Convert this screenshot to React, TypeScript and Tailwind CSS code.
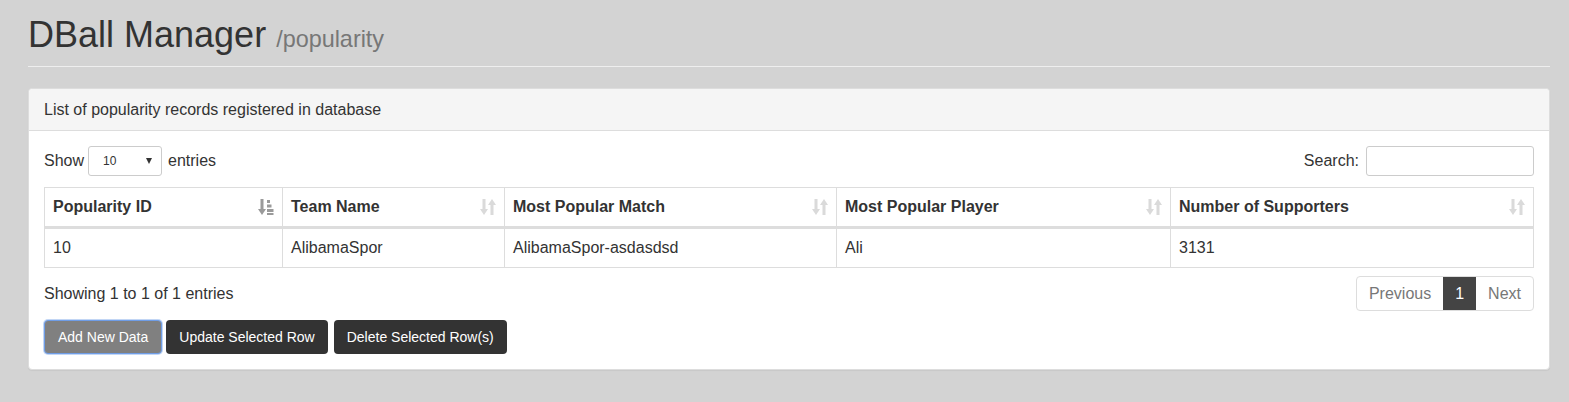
import React from "react";

type Col = { label: string; width: string; sorted?: boolean };

const columns: Col[] = [
  { label: "Popularity ID", width: "w-[238px]", sorted: true },
  { label: "Team Name", width: "w-[222px]" },
  { label: "Most Popular Match", width: "w-[332px]" },
  { label: "Most Popular Player", width: "w-[334px]" },
  { label: "Number of Supporters", width: "" },
];

const rows = [["10", "AlibamaSpor", "AlibamaSpor-asdasdsd", "Ali", "3131"]];

function SortIcon({ sorted }: { sorted?: boolean }) {
  if (sorted) {
    return (
      <svg width="16" height="18" viewBox="0 0 16 18" className="shrink-0">
        <g fill="#9a9a9a">
          <rect x="2.5" y="1" width="3" height="11" />
          <polygon points="0,11 8,11 4,17" />
          <rect x="9" y="2" width="3" height="3" />
          <rect x="9" y="6.5" width="4.5" height="3" />
          <rect x="9" y="11" width="6.5" height="3" />
          <rect x="9" y="15" width="6.5" height="2" />
        </g>
      </svg>
    );
  }
  return (
    <svg width="16" height="18" viewBox="0 0 16 18" className="shrink-0">
      <g fill="#dadada">
        <rect x="2.5" y="1" width="3" height="11" />
        <polygon points="0,11 8,11 4,17" />
        <rect x="10.5" y="6" width="3" height="11" />
        <polygon points="8,7 16,7 12,1" />
      </g>
    </svg>
  );
}

export default function App() {
  return (
    <main className="min-h-[402px] bg-[#d3d3d3] pl-[28px] pr-[19px] font-['Liberation_Sans',Arial,sans-serif] text-[16px] text-[#333]">
      <div className="border-b border-[#eeeeee] pt-[15px] pb-[7px]">
        <h1 className="text-[36px] leading-[40px] text-[#333]">
          DBall Manager{" "}
          <small className="text-[23.4px] text-[#777]">/popularity</small>
        </h1>
      </div>

      <div className="mt-[21px] rounded-[4px] border border-[#dddddd] bg-white shadow-[0_1px_1px_rgba(0,0,0,0.05)]">
        <div className="rounded-t-[4px] border-b border-[#dddddd] bg-[#f5f5f5] px-[15px] py-[10px] leading-[21px]">
          List of popularity records registered in database
        </div>

        <div className="p-[15px]">
          <div className="flex h-[30px] items-center justify-between">
            <label className="flex items-center">
              Show
              <span className="relative ml-[4px] mr-[6px] inline-flex h-[30px] w-[74px] items-center rounded-[3px] border border-[#cccccc] bg-white pl-[14px] text-[12px]">
                10
                <span className="absolute right-[9px] top-[11px] h-0 w-0 border-x-[3.5px] border-t-[6px] border-x-transparent border-t-[#333]" />
              </span>
              entries
            </label>
            <label className="flex items-center gap-[7px]">
              Search:
              <span className="inline-block h-[30px] w-[168px] rounded-[3px] border border-[#cccccc] bg-white" />
            </label>
          </div>

          <table className="mt-[11px] w-full border-collapse border border-[#dddddd]">
            <thead>
              <tr>
                {columns.map((c) => (
                  <th
                    key={c.label}
                    className={`${c.width} h-[40px] border border-b-[3px] border-[#dddddd] pl-[8px] pr-[8px] text-left font-bold`}
                  >
                    <div className="flex items-center justify-between">
                      <span>{c.label}</span>
                      <SortIcon sorted={c.sorted} />
                    </div>
                  </th>
                ))}
              </tr>
            </thead>
            <tbody>
              {rows.map((r, i) => (
                <tr key={i}>
                  {r.map((v, j) => (
                    <td
                      key={j}
                      className="h-[40px] border border-[#dddddd] px-[8px]"
                    >
                      {v}
                    </td>
                  ))}
                </tr>
              ))}
            </tbody>
          </table>

          <div className="mt-[8px] flex items-center justify-between">
            <div>Showing 1 to 1 of 1 entries</div>
            <div className="flex h-[35px] items-stretch overflow-hidden rounded-[4px] border border-[#dddddd] leading-[20px]">
              <span className="flex items-center px-[12px] text-[#777]">
                Previous
              </span>
              <span className="flex items-center bg-[#444444] px-[12px] text-white">
                1
              </span>
              <span className="flex items-center px-[12px] text-[#777]">
                Next
              </span>
            </div>
          </div>

          <div className="mt-[9px] flex text-[14px]">
            <button className="h-[34px] rounded-[4px] border border-[#6f9de6] bg-[#808080] px-[13px] text-white shadow-[0_0_0_1px_rgba(102,153,230,0.4)]">
              Add New Data
            </button>
            <button className="ml-[4px] h-[34px] rounded-[4px] bg-[#333333] px-[13px] text-white">
              Update Selected Row
            </button>
            <button className="ml-[6px] h-[34px] rounded-[4px] bg-[#333333] px-[13px] text-white">
              Delete Selected Row(s)
            </button>
          </div>
        </div>
      </div>
    </main>
  );
}
